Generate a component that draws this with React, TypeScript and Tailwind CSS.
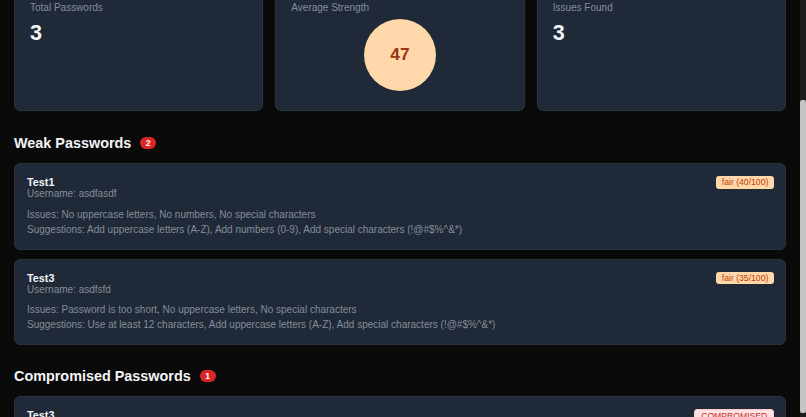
import { useLayoutEffect, useRef } from "react";

type Issue = {
  id: string;
  title: string;
  username: string;
  score: number;
  strength: string;
  issues: string[];
  suggestions: string[];
};

const weak: Issue[] = [
  {
    id: "1",
    title: "Test1",
    username: "asdfasdf",
    score: 40,
    strength: "fair",
    issues: ["No uppercase letters", "No numbers", "No special characters"],
    suggestions: ["Add uppercase letters (A-Z)", "Add numbers (0-9)", "Add special characters (!@#$%^&*)"],
  },
  {
    id: "3",
    title: "Test3",
    username: "asdfsfd",
    score: 35,
    strength: "fair",
    issues: ["Password is too short", "No uppercase letters", "No special characters"],
    suggestions: ["Use at least 12 characters", "Add uppercase letters (A-Z)", "Add special characters (!@#$%^&*)"],
  },
];

const compromised = [
  { id: "3", title: "Test3", username: "asdfsfd", note: "This password was found in a known data breach. Change it now." },
];

function StatCard({ label, children }: { label: string; children: React.ReactNode }) {
  return (
    <div className="rounded-md border border-[#2a3441] bg-[#1f2937] px-[15px] pt-[12px] pb-[13px]">
      <div className="text-[10px] leading-[14px] text-[#858d99]">{label}</div>
      {children}
    </div>
  );
}

function SectionTitle({ title, count }: { title: string; count: number }) {
  return (
    <div className="flex h-[20px] items-center">
      <h2 className="text-[14.4px] font-bold leading-[20px] text-[#f3f4f6]">{title}</h2>
      <span className="ml-[9px] rounded-full bg-[#dc2626] px-[5.5px] text-[8.6px] font-semibold leading-[12px] text-white">
        {count}
      </span>
    </div>
  );
}

function ItemCard({
  title,
  username,
  badge,
  badgeClass,
  children,
}: {
  title: string;
  username: string;
  badge: string;
  badgeClass: string;
  children?: React.ReactNode;
}) {
  return (
    <div className="rounded-md border border-[#2a3441] bg-[#1f2937] pt-[12px] pr-[11px] pb-[12px] pl-[12px]">
      <div className="flex items-start justify-between gap-3">
        <div>
          <div className="text-[10.8px] font-bold leading-[12px] text-[#f3f4f6]">{title}</div>
          <div className="text-[10px] leading-[12px] text-[#858d99]">Username: {username}</div>
        </div>
        <span className={`rounded-[3px] px-[5.7px] py-[1.3px] text-[8.64px] leading-[10px] ${badgeClass}`}>{badge}</span>
      </div>
      {children}
    </div>
  );
}

export default function App() {
  const scrollRef = useRef<HTMLDivElement>(null);
  const statsRef = useRef<HTMLDivElement>(null);

  // open the page scrolled so that the stat cards sit just under the top edge
  useLayoutEffect(() => {
    const box = scrollRef.current;
    const stats = statsRef.current;
    if (!box || !stats) return;
    box.scrollTop = stats.getBoundingClientRect().top - box.getBoundingClientRect().top + 12;
  }, []);

  const avg = 47;

  return (
    <div className="flex h-[417px] w-full bg-[#0a0a0a] font-['Liberation_Sans',Arial,sans-serif]">
      <div ref={scrollRef} className="h-full flex-1 overflow-y-auto [scrollbar-width:none]">
        <div className="px-[14px] pt-[14px] pb-[14px]">
          <header className="mb-[14px]">
            <h1 className="text-[18px] font-bold leading-[24px] text-white">Password Health</h1>
            <p className="text-[10px] leading-[14px] text-[#858d99]">Review weak, reused and compromised passwords in your vault.</p>
          </header>

          <div ref={statsRef} className="grid grid-cols-3 gap-3">
            <StatCard label="Total Passwords">
              <div className="mt-[5px] text-[21.6px] font-bold leading-[26px] text-[#f3f4f6]">3</div>
            </StatCard>
            <StatCard label="Average Strength">
              <div className="mt-[4px] mb-[6px] flex justify-center">
                <div className="flex h-[72px] w-[72px] items-center justify-center rounded-full bg-[#fed7aa]">
                  <span className="text-[17.3px] font-bold text-[#9a3412]">{avg}</span>
                </div>
              </div>
            </StatCard>
            <StatCard label="Issues Found">
              <div className="mt-[5px] text-[21.6px] font-bold leading-[26px] text-[#f3f4f6]">3</div>
            </StatCard>
          </div>

          <section className="mt-[22px]">
            <SectionTitle title="Weak Passwords" count={weak.length} />
            <div className="mt-[10px] flex flex-col gap-[9px]">
              {weak.map((w) => (
                <ItemCard
                  key={w.id}
                  title={w.title}
                  username={w.username}
                  badge={`${w.strength} (${w.score}/100)`}
                  badgeClass="bg-[#fed7aa] text-[#c2410c]"
                >
                  <div className="mt-[6.5px] text-[10px] leading-[15px] text-[#858d99]">
                    <div>Issues: {w.issues.join(", ")}</div>
                    <div>Suggestions: {w.suggestions.join(", ")}</div>
                  </div>
                </ItemCard>
              ))}
            </div>
          </section>

          <section className="mt-[21px]">
            <SectionTitle title="Compromised Passwords" count={compromised.length} />
            <div className="mt-[10px] flex flex-col gap-[9px]">
              {compromised.map((c) => (
                <ItemCard
                  key={c.id}
                  title={c.title}
                  username={c.username}
                  badge="COMPROMISED"
                  badgeClass="border border-[#fecaca] bg-[#fee2e2] text-[#c53030]"
                >
                  <div className="mt-[6.5px] text-[10px] leading-[15px] text-[#858d99]">{c.note}</div>
                </ItemCard>
              ))}
            </div>
          </section>
        </div>
      </div>

      {/* scrollbar strip */}
      <div className="h-full w-[6px] bg-[#1e1e1e]">
        <div className="mt-[100px] h-[313px] rounded-[2px] bg-[#c3c3c3]" />
      </div>
    </div>
  );
}
